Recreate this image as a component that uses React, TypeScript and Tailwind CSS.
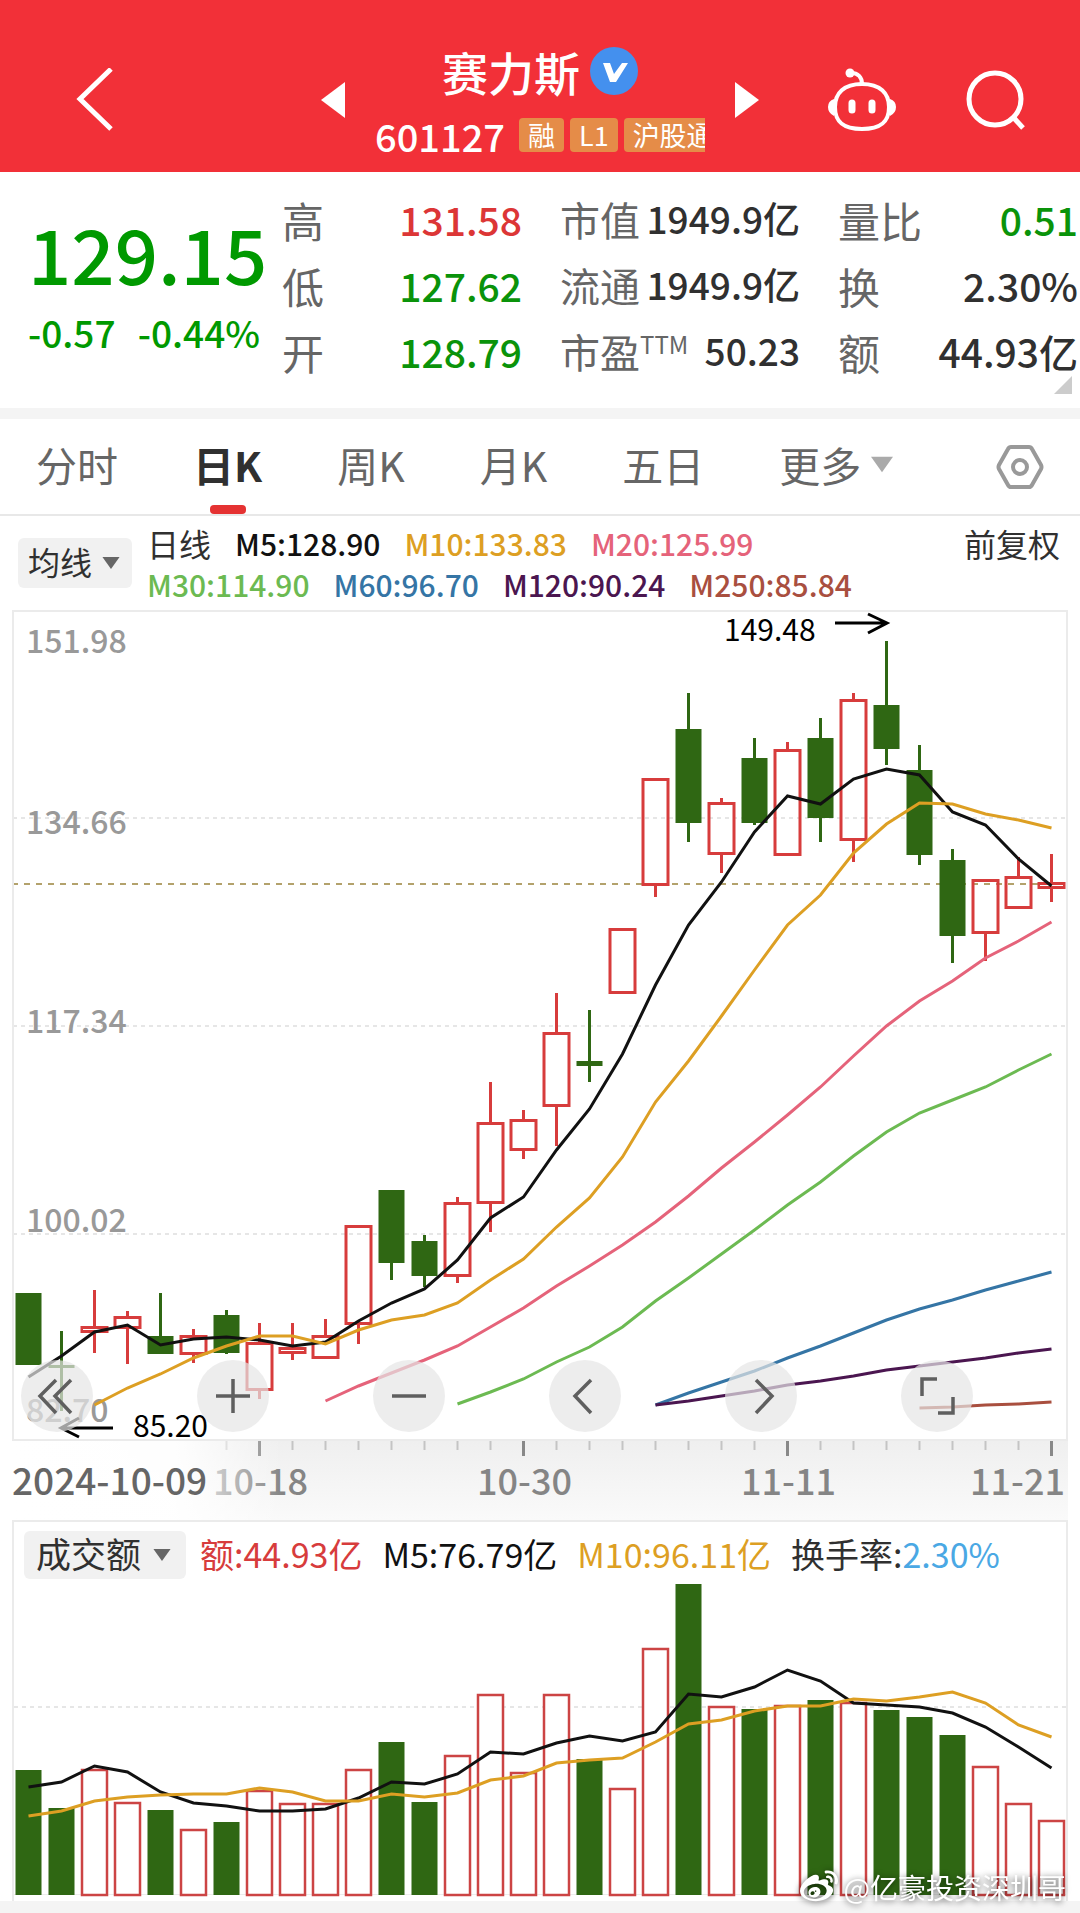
import { useState, type ReactNode } from 'react'
import { FaWeibo } from 'react-icons/fa'
import clsx from 'clsx'

const GREEN = '#2f6713'
const RED = '#d73c3c'

// x of the first candle and the distance between two candles
const X0 = 28.5
const STEP = 33
const cx = (i: number) => X0 + STEP * i

type Candle = { up: boolean; top: number; bottom: number; high: number; low: number }

// [up, body top, body bottom, wick top, wick bottom]
const RAW: [number, number, number, number, number][] = [
  [0, 1293, 1365, 1293, 1365],
  [0, 1365, 1368, 1331, 1411],
  [1, 1326, 1333, 1290, 1353],
  [1, 1316, 1329, 1311, 1364],
  [0, 1336, 1354, 1293, 1354],
  [1, 1335, 1355, 1329, 1363],
  [0, 1315, 1353, 1310, 1354],
  [1, 1342, 1391, 1323, 1399],
  [1, 1347, 1354, 1323, 1360],
  [1, 1335, 1359, 1319, 1359],
  [1, 1225, 1325, 1225, 1344],
  [0, 1190, 1263, 1190, 1280],
  [0, 1241, 1276, 1235, 1287],
  [1, 1202, 1277, 1197, 1283],
  [1, 1122, 1204, 1082, 1232],
  [1, 1119, 1151, 1110, 1159],
  [1, 1032, 1107, 993, 1146],
  [0, 1061, 1066, 1010, 1082],
  [1, 928, 994, 928, 994],
  [1, 778, 886, 778, 897],
  [0, 729, 823, 693, 842],
  [1, 802, 855, 798, 873],
  [0, 758, 823, 738, 825],
  [1, 749, 856, 742, 856],
  [0, 738, 818, 718, 842],
  [1, 699, 841, 693, 862],
  [0, 705, 749, 641, 765],
  [0, 770, 855, 745, 865],
  [0, 860, 936, 849, 963],
  [1, 879, 934, 879, 961],
  [1, 876, 909, 857, 909],
  [1, 882, 889, 854, 902],
]

const CANDLES: Candle[] = RAW.map(([up, top, bottom, high, low]) => ({ up: up === 1, top, bottom, high, low }))

const VOLUME = [
  1770, 1808, 1769, 1802, 1810, 1829, 1822, 1790, 1803, 1803, 1769, 1742, 1802, 1755, 1694, 1772, 1694, 1759, 1788,
  1648, 1584, 1706, 1709, 1705, 1700, 1702, 1710, 1717, 1735, 1766, 1803, 1820,
]

type Line = { color: string; from: number; ys: number[] }

const MA: Line[] = [
  {
    color: '#111111',
    from: 0,
    ys: [
      1377, 1356, 1332, 1325, 1345, 1339, 1337, 1340, 1346, 1342, 1321, 1303, 1289, 1260, 1218, 1197, 1150, 1109, 1054,
      985, 925, 882, 832, 796, 804, 779, 769, 775, 812, 825, 859, 886,
    ],
  },
  {
    color: '#dd9f23',
    from: 2,
    ys: [
      1405, 1388, 1374, 1358, 1346, 1336, 1336, 1344, 1330, 1320, 1315, 1303, 1280, 1259, 1227, 1198, 1157, 1102, 1061,
      1016, 970, 925, 895, 853, 824, 803, 804, 814, 820, 828,
    ],
  },
  {
    color: '#e5637a',
    from: 9,
    ys: [
      1401, 1386, 1373, 1360, 1346, 1327, 1308, 1286, 1266, 1245, 1222, 1196, 1168, 1142, 1115, 1087, 1056, 1026, 1001,
      981, 958, 941, 922,
    ],
  },
  {
    color: '#6cba52',
    from: 13,
    ys: [
      1404, 1392, 1379, 1362, 1347, 1327, 1301, 1278, 1254, 1230, 1205, 1182, 1156, 1132, 1113, 1100, 1087, 1070, 1054,
    ],
  },
  { color: '#3575a5', from: 19, ys: [1405, 1393, 1382, 1371, 1358, 1346, 1333, 1320, 1309, 1300, 1290, 1281, 1272] },
  { color: '#4b1650', from: 19, ys: [1405, 1401, 1396, 1391, 1385, 1381, 1376, 1370, 1366, 1362, 1358, 1353, 1349] },
  { color: '#a94f3f', from: 27, ys: [1408, 1407, 1405, 1404, 1402] },
]

const VOL_MA: Line[] = [
  {
    color: '#111111',
    from: 0,
    ys: [
      1787, 1782, 1766, 1772, 1792, 1803, 1806, 1811, 1811, 1809, 1798, 1782, 1784, 1774, 1752, 1754, 1743, 1736, 1741,
      1732, 1694, 1697, 1687, 1670, 1681, 1703, 1705, 1707, 1713, 1727, 1747, 1768,
    ],
  },
  {
    color: '#dd9f23',
    from: 0,
    ys: [
      1816, 1811, 1801, 1797, 1795, 1794, 1794, 1788, 1792, 1801, 1801, 1794, 1797, 1793, 1780, 1776, 1763, 1760, 1758,
      1742, 1724, 1720, 1711, 1706, 1706, 1699, 1701, 1697, 1692, 1703, 1725, 1737,
    ],
  },
]

const points = (l: Line) => l.ys.map((y, i) => `${cx(l.from + i)},${y}`).join(' ')

function Caret({ className }: { className?: string }) {
  return (
    <svg viewBox="0 0 20 14" className={className} aria-hidden="true">
      <path d="M0 0h20L10 14z" fill="currentColor" />
    </svg>
  )
}

function Header() {
  return (
    <header className="grid h-[172px] grid-cols-[1fr_auto_1fr] items-center bg-[#f23038] pt-7 text-white">
      <button aria-label="返回" className="ml-[74px] justify-self-start">
        <svg viewBox="0 0 40 64" className="h-16 w-10" fill="none" stroke="currentColor" strokeWidth="5">
          <path d="M37 1 6 31l31 30" />
        </svg>
      </button>

      <div className="flex items-center">
        <button aria-label="上一只">
          <svg viewBox="0 0 24 36" className="h-9 w-6" fill="currentColor">
            <path d="M24 0v36L0 18z" />
          </svg>
        </button>
        <div className="mx-[30px] mt-1.5 w-[330px]">
          <div className="flex h-16 items-center justify-center gap-2.5">
            <h1 className="text-[46px] font-medium">赛力斯</h1>
            <svg viewBox="0 0 48 48" className="size-12" role="img" aria-label="认证">
              <circle cx="24" cy="24" r="24" fill="#4490ee" />
              <path d="M13 16h7l4 11 8-11h6L26 35h-6z" fill="#fff" />
            </svg>
          </div>
          <div className="flex h-16 items-center gap-1.5 overflow-hidden whitespace-nowrap">
            <span className="mr-2 text-[38px] font-medium">601127</span>
            <span className="h-[34px] rounded-sm bg-[#e58c48] px-[9px] text-[27px] leading-[33px]">融</span>
            <span className="h-[34px] rounded-sm bg-[#e58c48] px-[9px] text-[27px] leading-[33px]">L1</span>
            <span className="h-[34px] rounded-sm bg-[#e58c48] px-[9px] text-[27px] leading-[33px]">沪股通</span>
          </div>
        </div>
        <button aria-label="下一只">
          <svg viewBox="0 0 24 36" className="h-9 w-6" fill="currentColor">
            <path d="M0 0v36l24-18z" />
          </svg>
        </button>
      </div>

      <div className="mr-[53px] flex items-center gap-[68px] justify-self-end">
        <button aria-label="助手">
          <svg viewBox="0 0 70 66" className="h-[66px] w-[70px]" fill="none" stroke="currentColor" strokeWidth="4">
            <path d="M35 17c18 0 27 9 27 23 0 15-8 22-27 22S8 55 8 40c0-14 9-23 27-23z" />
            <path d="M35 17c0-7-4-11-11-11" />
            <circle cx="23" cy="6" r="4.5" fill="currentColor" stroke="none" />
            <path d="M7 32q-6 2-6 8t6 9zM63 32q6 2 6 8t-6 9z" fill="currentColor" stroke="none" />
            <path d="M25 36v7M45 36v7" strokeWidth="7" strokeLinecap="round" />
          </svg>
        </button>
        <button aria-label="搜索">
          <svg viewBox="0 0 62 64" className="h-16 w-[62px]" fill="none" stroke="currentColor" strokeWidth="5">
            <circle cx="30" cy="31" r="26" />
            <path d="m48 49 10 11" />
          </svg>
        </button>
      </div>
    </header>
  )
}

function Stat({ label, value, tone }: { label: ReactNode; value: string; tone: string }) {
  return (
    <div className="flex h-[66px] items-center justify-between">
      <dt className="text-[#666]">{label}</dt>
      <dd className={clsx('font-medium', tone)}>{value}</dd>
    </div>
  )
}

function Quote() {
  return (
    <section className="relative flex h-[236px] pt-[14px] pr-0.5 pl-7 whitespace-nowrap">
      <div className="w-[254px] text-[#009900]">
        <div className="mt-3.5 h-[106px] text-[76px] leading-[104px] font-medium">129.15</div>
        <div className="flex h-[50px] w-[232px] justify-between text-[37px] leading-[52px] font-medium">
          <span>-0.57</span>
          <span>-0.44%</span>
        </div>
      </div>
      <div className="grid flex-1 grid-cols-3 gap-x-[38px]">
        <dl className="text-[39px] [&_dt]:text-[42px]">
          <Stat label="高" value="131.58" tone="text-[#dc3636]" />
          <Stat label="低" value="127.62" tone="text-[#0a930a]" />
          <Stat label="开" value="128.79" tone="text-[#0a930a]" />
        </dl>
        <dl className="text-[37px] [&_dt]:text-[40px]">
          <Stat label="市值" value="1949.9亿" tone="text-[#303030]" />
          <Stat label="流通" value="1949.9亿" tone="text-[#303030]" />
          <Stat
            label={
              <span className="flex">
                市盈<span className="text-[24px] leading-[46px]">TTM</span>
              </span>
            }
            value="50.23"
            tone="text-[#303030]"
          />
        </dl>
        <dl className="text-[39px] [&_dt]:text-[42px]">
          <Stat label="量比" value="0.51" tone="text-[#0a930a]" />
          <Stat label="换" value="2.30%" tone="text-[#303030]" />
          <Stat label="额" value="44.93亿" tone="text-[#303030]" />
        </dl>
      </div>
      <svg viewBox="0 0 18 18" className="absolute right-2 bottom-3.5 size-[18px]" aria-hidden="true">
        <path d="M18 0v18H0z" fill="#ccc" />
      </svg>
    </section>
  )
}

const TABS = ['分时', '日K', '周K', '月K', '五日']

function Tabs() {
  const [tab, setTab] = useState('日K')
  return (
    <nav className="flex h-[97px] items-center gap-[75px] border-b-2 border-[#e8e8e8] px-9 text-[41px] whitespace-nowrap text-[#666]">
      {TABS.map((t) => (
        <button
          key={t}
          onClick={() => setTab(t)}
          className={clsx('relative h-full pb-1', t === tab && 'font-bold text-[#303030]')}
        >
          {t}
          {t === tab && (
            <span className="absolute bottom-0 left-1/2 h-[9px] w-9 -translate-x-1/2 rounded bg-[#e53232]" />
          )}
        </button>
      ))}
      <button aria-haspopup="menu" className="flex h-full items-center gap-2.5 pb-1">
        更多
        <Caret className="h-[17px] w-[22px] text-[#aaa]" />
      </button>
      <button aria-label="设置" className="ml-auto">
        <svg viewBox="0 0 48 46" className="h-[46px] w-12" fill="none" stroke="#999" strokeWidth="4">
          <path d="M15 3h18q2 0 3 2l9 16q1 2 0 4l-9 16q-1 2-3 2H15q-2 0-3-2L3 25q-1-2 0-4l9-16q1-2 3-2z" />
          <circle cx="24" cy="23" r="7" />
        </svg>
      </button>
    </nav>
  )
}

function Legend() {
  return (
    <section className="flex h-[94px] items-start pt-[7px] pr-5 pl-[18px] whitespace-nowrap">
      <div className="relative mt-[15px] mr-[15px]">
        <select
          aria-label="主图指标"
          className="h-[50px] w-[114px] appearance-none rounded-md bg-[#f1f1f1] pb-1 pl-2.5 text-[32px] leading-[46px] text-[#303030]"
        >
          <option>均线</option>
        </select>
        <Caret className="pointer-events-none absolute top-[19px] right-3 h-3 w-[18px] text-[#666]" />
      </div>
      <div className="text-[30px] leading-[41px] font-medium">
        <div className="flex gap-6">
          <span className="text-[32px] font-normal text-[#303030]">日线</span>
          <span className="text-[#111]">M5:128.90</span>
          <span className="text-[#dd9f23]">M10:133.83</span>
          <span className="text-[#e5637a]">M20:125.99</span>
        </div>
        <div className="flex gap-6">
          <span className="text-[#6cba52]">M30:114.90</span>
          <span className="text-[#3575a5]">M60:96.70</span>
          <span className="text-[#4b1650]">M120:90.24</span>
          <span className="text-[#a94f3f]">M250:85.84</span>
        </div>
      </div>
      <button className="ml-auto text-[32px] leading-[41px] text-[#303030]">前复权</button>
    </section>
  )
}

const GRID = [818, 1026, 1234]
const PRICES: [string, number][] = [
  ['151.98', 653],
  ['134.66', 834],
  ['117.34', 1033],
  ['100.02', 1232],
  ['82.70', 1422],
]
const DATES: [string, number][] = [
  ['10-18', 7],
  ['10-30', 15],
  ['11-11', 23],
]
const MAJOR = [7, 15, 23, 31]

const TOOLS: [string, string][] = [
  ['最早', 'M35 20 19 36l16 17M50 20 34 36l16 17'],
  ['放大', 'M36 19v34M19 36h34'],
  ['缩小', 'M19 36h34'],
  ['左移', 'M42 20 26 36l16 17'],
  ['右移', 'M31 20l16 16-16 17'],
  ['全屏', 'M21 36V19h15M37 53h15V37'],
]

function KLine() {
  return (
    <section className="relative mx-3">
      <svg viewBox="12 610 1056 910" className="block w-full overflow-visible" role="img" aria-label="日K线">
        <defs>
          <linearGradient id="axis" x1="0" y1="0" x2="0" y2="1">
            <stop offset="0" stopColor="#efefef" />
            <stop offset="1" stopColor="#fafafa" />
          </linearGradient>
          <linearGradient id="fade" x1="0" y1="0" x2="1" y2="0">
            <stop offset="0" stopColor="#fff" />
            <stop offset="0.6" stopColor="#fff" stopOpacity="0.95" />
            <stop offset="1" stopColor="#fff" stopOpacity="0" />
          </linearGradient>
        </defs>

        {GRID.map((y) => (
          <path key={y} d={`M13 ${y}H1066`} stroke="#dedede" strokeWidth="1.5" strokeDasharray="4 4" />
        ))}
        <path d="M12 884H1066" stroke="#b3a26c" strokeWidth="2" strokeDasharray="6 6" />
        <path d="M13 1440V611H1067V1440z" fill="none" stroke="#ebebeb" strokeWidth="2" />

        <g fontSize="32" fontWeight="500" fill="#999">
          {PRICES.map(([p, y]) => (
            <text key={p} x="26" y={y}>
              {p}
            </text>
          ))}
        </g>

        {CANDLES.map((c, i) =>
          c.up ? (
            <g key={i} stroke={RED} strokeWidth="3" fill="none">
              <path d={`M${cx(i)} ${c.high}V${c.top}M${cx(i)} ${c.bottom}V${c.low}`} />
              <rect x={cx(i) - 12.5} y={c.top + 1.5} width="25" height={c.bottom - c.top - 3} />
            </g>
          ) : (
            <g key={i} fill={GREEN}>
              <rect x={cx(i) - 1.5} y={c.high} width="3" height={c.low - c.high} />
              <rect x={cx(i) - 13} y={c.top} width="26" height={c.bottom - c.top} />
            </g>
          ),
        )}
        {MA.map((l) => (
          <polyline key={l.color} points={points(l)} fill="none" stroke={l.color} strokeWidth="3" />
        ))}

        {/* high and low of the visible range */}
        <g fontSize="30" fill="#000">
          <text x="724" y="641">
            149.48
          </text>
          <text x="133" y="1437">
            85.20
          </text>
        </g>
        <path
          d="M835 623h52M868 614l19 9-19 10M113 1428H61M79 1418l-18 10 18 9"
          fill="none"
          stroke="#000"
          strokeWidth="3"
        />

        {/* time axis */}
        <rect x="12" y="1441" width="1056" height="79" fill="url(#axis)" />
        {CANDLES.map((_, i) =>
          i < 6 ? null : MAJOR.includes(i) ? (
            <path key={i} d={`M${cx(i)} 1441v15`} stroke="#888" strokeWidth="3" />
          ) : (
            <path key={i} d={`M${cx(i)} 1441v9`} stroke="#c4c4c4" strokeWidth="2" />
          ),
        )}
        <g fontSize="36" fontWeight="500" fill="#858585" textAnchor="middle">
          {DATES.map(([d, i]) => (
            <text key={d} x={cx(i) + 1} y="1495">
              {d}
            </text>
          ))}
          <text x="1065" y="1495" textAnchor="end">
            11-21
          </text>
        </g>
        <rect x="12" y="1441" width="270" height="79" fill="url(#fade)" />
        <text x="12" y="1495" fontSize="37" fontWeight="500" fill="#666">
          2024-10-09
        </text>
      </svg>

      <div className="absolute top-[750px] left-[9px] flex gap-[104px]">
        {TOOLS.map(([name, d]) => (
          <button key={name} aria-label={name} className="size-[72px] rounded-full bg-[#e5e5e5]/70">
            <svg viewBox="0 0 72 72" className="size-full" fill="none" stroke="#5f5f5f" strokeWidth="3.5">
              <path d={d} />
            </svg>
          </button>
        ))}
      </div>
    </section>
  )
}

function Turnover() {
  return (
    <section className="relative mx-3 border-x-2 border-t-2 border-[#ebebeb]">
      <div className="flex h-[58px] items-start gap-5 pt-[9px] pl-2.5 text-[34px] leading-[46px] whitespace-nowrap">
        <div className="relative -mr-1.5">
          <select
            aria-label="副图指标"
            className="block h-12 w-[162px] appearance-none rounded-md bg-[#f1f1f1] pb-1 pl-3 text-[35px] leading-[44px] text-[#303030]"
          >
            <option>成交额</option>
          </select>
          <Caret className="pointer-events-none absolute top-[18px] right-[15px] h-3 w-[18px] text-[#666]" />
        </div>
        <span className="text-[#d73c3c]">额:44.93亿</span>
        <span className="text-[#111]">M5:76.79亿</span>
        <span className="text-[#dd9f23]">M10:96.11亿</span>
        <span className="text-[#303030]">
          换手率:<span className="text-[#4aa8e4]">2.30%</span>
        </span>
      </div>

      <svg viewBox="14 1580 1052 321" className="block w-full" role="img" aria-label="成交额">
        <path d="M14 1707H1066" stroke="#dedede" strokeWidth="1.5" strokeDasharray="4 4" />
        <path d="M14 1894.5H1066" stroke="#ececec" />
        {VOLUME.map((y, i) =>
          CANDLES[i].up ? (
            <rect
              key={i}
              x={cx(i) - 12.5}
              y={y + 1}
              width="25"
              height={1894 - y}
              fill="#fff"
              stroke="#cc4444"
              strokeWidth="2.5"
            />
          ) : (
            <rect key={i} x={cx(i) - 13} y={y} width="26" height={1895 - y} fill={GREEN} />
          ),
        )}
        {VOL_MA.map((l) => (
          <polyline key={l.color} points={points(l)} fill="none" stroke={l.color} strokeWidth="3" />
        ))}
      </svg>

      <div className="absolute right-0 -bottom-1.5 flex items-center gap-1.5 text-[28px] leading-10 whitespace-nowrap text-white drop-shadow-[0_1px_3px_rgba(0,0,0,0.7)]">
        <FaWeibo size={38} />
        @亿豪投资深圳哥
      </div>
    </section>
  )
}

export default function App() {
  return (
    <main className="min-h-screen bg-white font-['Noto_Sans_CJK_SC',sans-serif]">
      <Header />
      <Quote />
      <div className="h-[11px] bg-[#f4f4f4]" />
      <Tabs />
      <Legend />
      <KLine />
      <Turnover />
      <div className="h-3 bg-[#f4f4f4]" />
    </main>
  )
}
